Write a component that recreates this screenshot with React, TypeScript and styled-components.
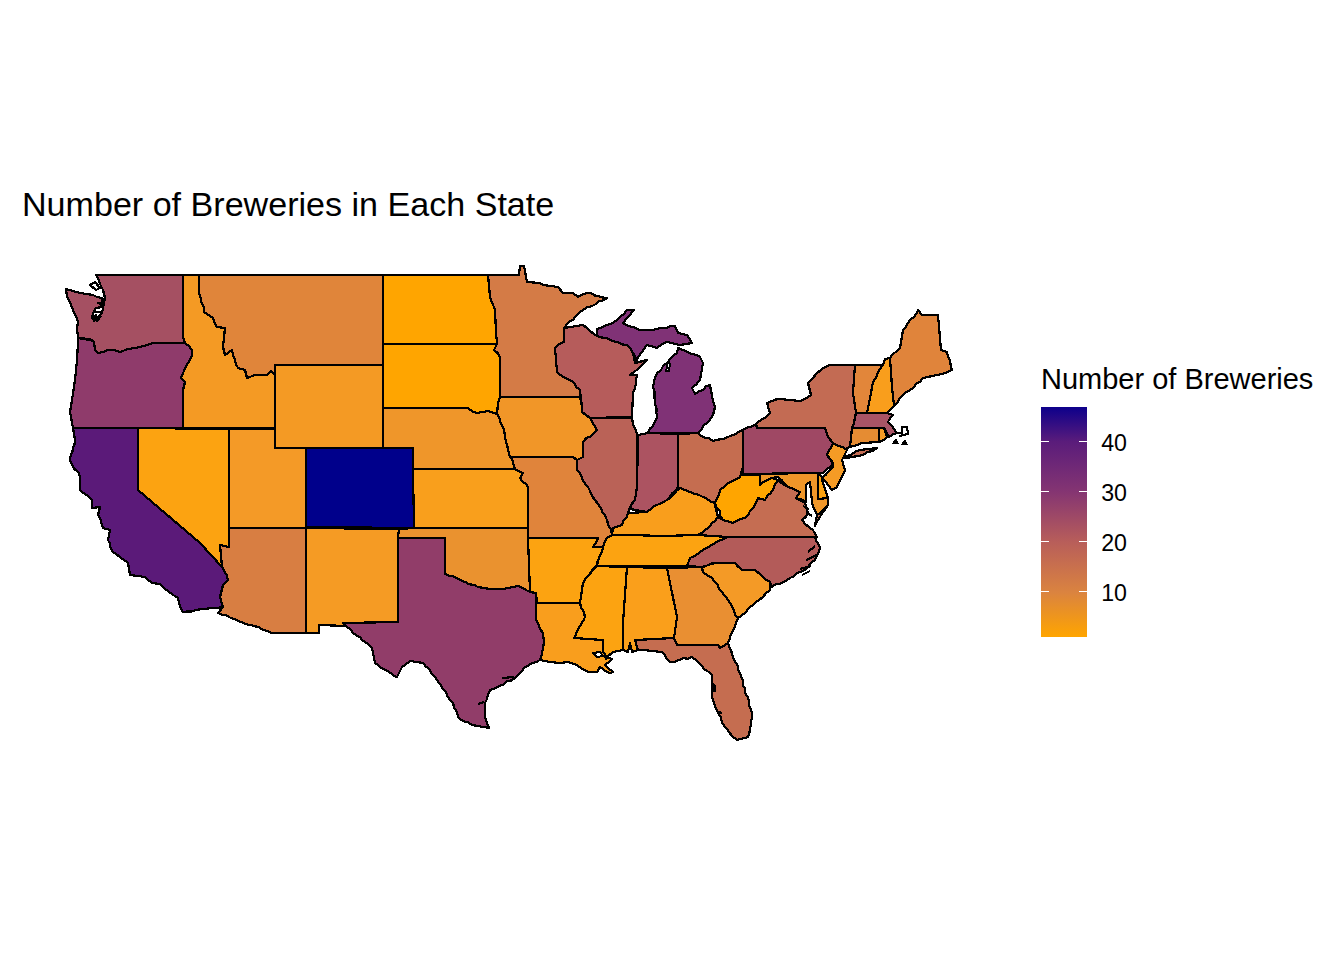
import React from "react";
import styled, { createGlobalStyle } from "styled-components";

const Global = createGlobalStyle`
  html, body { margin: 0; padding: 0; background: #fff; }
  body { font-family: "Liberation Sans", Arial, sans-serif; color: #000; }
`;

const Page = styled.main`
  width: 1344px;
  height: 960px;
  padding-top: 185px;
  box-sizing: border-box;
  overflow: hidden;
`;

const Title = styled.h1`
  margin: 0 0 37px 22px;
  font-size: 34.1px;
  line-height: 38px;
  font-weight: 400;
  white-space: nowrap;
`;

const PlotRow = styled.div`
  display: flex;
  align-items: flex-start;
`;

const MapSvg = styled.svg`
  display: block;
  width: 1000px;
  height: 500px;
  flex: none;
  shape-rendering: crispEdges;
`;

const Region = styled.polygon<{ $fill: string }>`
  fill: ${(p) => p.$fill};
  stroke: #000;
  stroke-width: 2.2px;
  stroke-linejoin: round;
`;

const Coast = styled.path`
  fill: none;
  stroke: #000;
  stroke-width: 2.2px;
  stroke-linejoin: round;
`;

const Water = styled.path`
  fill: #fff;
  stroke: #000;
  stroke-width: 2px;
  stroke-linejoin: round;
`;

const Blob = styled.path`
  fill: #000;
  stroke: #000;
  stroke-width: 1px;
`;

const Legend = styled.aside`
  margin: 102px 0 0 41px;
`;

const LegendTitle = styled.div`
  font-size: 29px;
  line-height: 34px;
  margin-bottom: 11px;
  white-space: nowrap;
`;

const LegendBody = styled.div`
  display: flex;
`;

const Bar = styled.div`
  width: 46px;
  height: 230px;
  box-sizing: border-box;
  padding-top: 34px;
  background: linear-gradient(
    to bottom,
    #0d008b 0%,
    #5a1c7b 15%,
    #853572 37%,
    #b85e5a 58.7%,
    #da8340 80.4%,
    #ffa500 100%
  );
`;

const TickRow = styled.div`
  display: flex;
  justify-content: space-between;
  height: 50px;
`;

const Tick = styled.span`
  display: block;
  width: 8px;
  height: 1px;
  background: #fff;
`;

const Labels = styled.div`
  margin: 11px 0 0 13px;
`;

const Label = styled.div`
  font-size: 23.2px;
  line-height: 50px;
  height: 50px;
  width: 27px;
  text-align: right;
`;

const states: [string, string, string][] = [
  ["WA", "#a55062", "96,275 183,275 183,337 185,343 170,343 153,343 144,346 135,348 128,349 120,352 114,350 108,350 103,352 98,353 95,350 94,342 90,339 78,338 77,328 78,322 73,310 67,297 66,289 73,291 80,293 93,295 97,297 102,298 102,307 96,308 92,318 97,318 102,313 105,298 103,290 100,284"],
  ["OR", "#8f3b6b", "78,338 90,339 94,342 95,350 98,353 103,352 108,350 114,350 120,352 128,349 135,348 144,346 153,343 185,343 192,350 192,355 185,368 181,378 185,382 183,390 183,428 73,428 70,412 72,400 75,380 77,360 78,342"],
  ["CA", "#5b1a79", "73,428 138,428 138,490 200,543 222,567 228,580 223,585 220,597 223,607 217,608 183,612 180,607 178,598 165,589 160,584 152,583 145,577 130,575 128,563 113,552 108,540 110,530 103,528 98,515 100,507 92,508 92,500 80,490 80,477 70,460 75,440"],
  ["NV", "#fca311", "138,428 229,429 229,547 220,545 222,567 200,543 138,490"],
  ["ID", "#f49a24", "183,275 199,275 199,293 204,312 213,318 217,327 225,328 223,347 225,355 232,350 238,368 245,370 247,378 255,375 267,375 271,371 275,375 275,428 227,428 183,428 183,390 185,382 181,378 185,368 192,355 192,350 185,343 183,337"],
  ["MT", "#e0853a", "199,275 383,275 383,365 275,365 275,375 271,371 267,375 255,375 247,378 245,370 238,368 232,350 225,355 223,347 225,328 217,327 213,318 204,312 199,293"],
  ["WY", "#f49a24", "275,365 383,365 383,448 275,448"],
  ["UT", "#f49a27", "229,429 275,429 275,448 306,448 306,528 229,528"],
  ["CO", "#00008b", "306,448 413,448 414,528 306,527"],
  ["AZ", "#d87e42", "229,528 306,528 306,633 272,633 250,625 218,613 223,607 220,597 223,585 228,580 222,567 220,545 229,547"],
  ["NM", "#f59b24", "306,528 399,529 398,622 343,623 347,626 319,625 319,633 306,633"],
  ["ND", "#ffa500", "383,275 488,275 490,297 495,310 496,332 497,344 383,344"],
  ["SD", "#ffa500", "383,344 497,344 494,350 500,357 500,397 498,403 497,414 488,411 477,413 468,408 383,408"],
  ["NE", "#ef962a", "383,408 468,408 477,413 488,411 497,414 503,427 508,450 512,459 515,469 413,469 413,448 383,448"],
  ["KS", "#f99f1c", "413,469 515,469 523,473 520,478 528,487 528,528 414,528"],
  ["OK", "#ea922f", "399,529 414,528 528,528 528,538 530,592 518,586 503,589 490,589 478,587 457,578 445,574 445,538 398,538"],
  ["TX", "#913d69", "398,538 445,538 445,574 457,578 478,587 490,589 503,589 518,586 530,592 536,593 536,620 543,633 544,643 540,660 525,667 515,678 490,690 485,703 485,717 489,728 472,725 458,717 453,703 435,677 423,663 410,661 402,667 397,677 375,663 372,648 347,627 343,623 398,622"],
  ["MN", "#d47b46", "488,275 519,275 520,266 524,266 527,282 540,283 543,285 558,287 563,293 573,293 578,297 587,293 607,298 583,310 564,328 564,342 555,348 557,372 570,380 580,390 580,397 500,397 500,357 494,350 497,344 496,332 495,310 490,297"],
  ["IA", "#f19628", "500,397 580,397 582,407 582,412 590,418 597,430 583,442 583,457 577,460 573,457 510,457 508,450 503,427 497,414 498,403"],
  ["MO", "#e0843b", "510,457 573,457 577,460 577,470 588,487 595,500 607,520 612,535 607,538 603,547 593,547 598,538 528,538 528,487 520,478 523,473 515,469 512,459"],
  ["AR", "#fca311", "528,538 598,538 593,547 603,547 597,565 583,583 580,603 537,603 536,593 530,592"],
  ["LA", "#f99e1d", "537,603 580,603 585,617 574,638 603,640 603,652 607,657 612,659 605,665 613,672 610,673 600,667 597,672 588,672 577,665 568,662 560,663 550,662 540,660 544,643 543,633 536,620 536,603"],
  ["MS", "#fca311", "597,566 627,567 623,623 623,650 613,652 607,657 603,652 603,640 574,638 585,617 580,603 583,583"],
  ["AL", "#fa9f1b", "627,567 667,568 677,617 674,638 635,640 638,650 632,652 630,643 628,652 623,650 623,623"],
  ["GA", "#e98f32", "667,568 702,567 703,572 712,578 730,603 738,618 728,643 720,648 718,645 677,645 674,638 677,617"],
  ["FL", "#c56d50", "635,640 674,638 677,645 718,645 720,648 728,643 740,673 752,713 748,737 737,740 725,727 718,713 712,697 712,675 692,657 670,662 662,652 643,650 638,650"],
  ["SC", "#f49a26", "702,568 715,563 735,563 742,570 755,570 770,582 770,590 753,605 738,618 730,603 712,578 703,572"],
  ["NC", "#b35b59", "728,537 815,537 820,548 815,560 805,570 790,578 772,587 770,582 755,570 742,570 735,563 715,563 702,567 687,566 690,558 707,548 715,543"],
  ["TN", "#fca311", "597,566 603,547 607,538 612,535 630,535 662,536 698,535 728,537 715,543 707,548 690,558 687,566"],
  ["KY", "#f99e1c", "612,535 613,528 622,525 628,513 647,512 657,505 667,500 680,488 690,492 703,497 713,500 715,505 718,517 705,530 698,535 662,536 630,535"],
  ["IL", "#ba6257", "590,418 632,418 637,435 637,487 635,500 630,507 628,513 622,525 613,528 612,535 607,520 595,500 588,487 577,470 577,460 583,457 583,442 597,430"],
  ["WI", "#b65c5b", "564,328 583,325 587,328 597,336 627,345 633,353 635,363 647,360 630,375 637,375 633,393 632,417 590,418 582,412 582,407 580,390 570,380 557,372 555,348 564,342"],
  ["MI-U", "#803276", "597,336 597,329 617,320 627,310 634,310 623,323 640,330 653,330 675,326 678,333 687,335 692,343 680,345 667,342 657,348 647,345 637,360 633,353 627,345"],
  ["MI-L", "#803276", "678,348 700,357 703,363 700,380 692,388 695,394 710,385 715,407 713,415 698,433 648,433 657,417 653,387 657,373 667,363 677,353"],
  ["IN", "#ac5361", "638,435 648,433 678,434 678,487 667,500 657,505 647,512 630,509 635,500 637,487"],
  ["OH", "#c56d50", "678,434 698,433 700,435 713,441 728,437 743,430 743,467 740,477 730,482 720,490 715,503 703,497 690,492 680,488 678,487"],
  ["PA", "#9f4864", "743,430 756,424 757,428 825,428 828,437 833,443 827,455 833,463 823,473 743,474"],
  ["NY", "#c36b53", "757,428 756,424 770,413 767,403 780,399 800,401 811,395 808,383 823,368 830,365 855,365 853,393 856,413 852,428 850,447 843,450 833,443 828,437 825,428"],
  ["LI", "#c36b53", "843,457 860,450 877,448 863,455 847,458"],
  ["VT", "#e2863a", "855,365 883,365 873,382 870,398 867,413 856,413 853,393"],
  ["NH", "#f99e1c", "883,365 885,359 890,358 892,387 894,406 887,413 867,413 870,398 873,382"],
  ["ME", "#e0843b", "890,358 900,348 903,330 918,310 922,315 938,315 941,350 947,352 952,370 937,375 923,378 910,390 900,398 894,406 892,387"],
  ["MA", "#a95466", "856,413 887,413 893,415 888,422 897,433 889,437 884,428 852,428"],
  ["CT", "#e58c33", "852,428 879,428 879,442 862,443 850,447"],
  ["RI", "#f59b25", "879,428 884,428 887,437 880,442 879,442"],
  ["NJ", "#f59b25", "833,443 847,450 842,460 845,470 837,487 832,490 822,478 833,467 833,463 827,455"],
  ["MD", "#ef9629", "743,474 818,473 818,499 828,498 828,505 817,515 812,502 810,482 806,485 806,502 796,498 800,492 788,487 778,477 772,478 760,485 760,474"],
  ["DE", "#fca311", "818,473 822,477 828,498 818,499"],
  ["WV", "#ffa500", "743,467 743,475 760,475 760,485 772,478 778,480 773,490 765,500 758,498 753,508 745,518 733,523 723,520 715,503 720,490 730,482 740,477"],
  ["VA", "#c56d52", "698,535 705,530 718,517 723,520 733,523 745,518 753,508 758,498 765,500 773,490 778,480 788,487 800,492 796,498 805,503 808,513 802,520 813,530 817,537 728,537"],
  ["VA-E", "#c56d52", "828,505 817,515 815,526 820,517"],
];

// Surveyed straight borders that must not pick up the shoreline/river wobble.
const straightEdges = new Set([
  "138,490|200,543",
  "200,543|222,567",
  "623,623|627,567",
  "667,568|677,617",
]);

const hash = (n: number) => {
  const s = Math.sin(n * 127.1) * 43758.5453;
  return s - Math.floor(s);
};

// Adds a small irregularity to river and shore edges. An edge gets the same
// wobble in both neighbouring states because it is computed from the sorted pair.
const roughen = (points: string) => {
  const pts = points.split(" ").map((p) => p.split(",").map(Number));
  const out: string[] = [];
  pts.forEach(([x0, y0], i) => {
    const [x1, y1] = pts[(i + 1) % pts.length];
    out.push(`${x0},${y0}`);
    const dx = x1 - x0;
    const dy = y1 - y0;
    const a = `${x0},${y0}`;
    const b = `${x1},${y1}`;
    const forward = x0 < x1 || (x0 === x1 && y0 < y1);
    const key = forward ? `${a}|${b}` : `${b}|${a}`;
    if (Math.abs(dx) <= 3 || Math.abs(dy) <= 3 || straightEdges.has(key)) return;
    const len = Math.hypot(dx, dy);
    const steps = Math.floor(len / 4);
    const seed = x0 + x1 + (y0 + y1) * 7;
    for (let k = 1; k < steps; k++) {
      const idx = forward ? k : steps - k;
      const off = (hash(seed + idx) - 0.5) * 1.8;
      const sign = forward ? 1 : -1;
      const px = x0 + dx * (k / steps) + (-dy / len) * off * sign;
      const py = y0 + dy * (k / steps) + (dx / len) * off * sign;
      out.push(`${px.toFixed(1)},${py.toFixed(1)}`);
    }
  });
  return out.join(" ");
};

const coastDetails = [
  "M90 285 L95 282 L100 288 L96 290 Z",
  "M103 298 L100 308 M97 303 L103 304 M94 312 L101 312 M92 318 L97 321 L101 316",
  "M78 338 L90 340",
  "M806 512 L812 516 M803 506 L809 509",
  "M808 552 L815 546 M806 560 L817 555 M800 569 L811 566 M802 575 L810 571",
  "M718 712 L722 713",
  "M528 666 L522 669 M502 678 L514 677 M484 702 L478 704",
  "M897 433 L902 433 L902 427 L907 427 L908 434 L899 436",
];

const blobs = [
  "M893 443 L896 439 L898 443 Z",
  "M902 444 L905 440 L907 444 Z",
  "M711 682 L716 686 L715 692 L711 690 Z",
  "M604 656 L608 657 L606 660 Z",
  "M98 319 L94 322 L92 318 L96 314 Z",
];

const App: React.FC = () => (
  <Page>
    <Global />
    <Title>Number of Breweries in Each State</Title>
    <PlotRow>
      <MapSvg viewBox="0 260 1000 500" role="img" aria-label="Choropleth map of breweries per US state">
        {states.map(([id, fill, points]) => (
          <Region key={id} $fill={fill} points={roughen(points)} />
        ))}
        <Water d="M593 653 L600 652 L603 656 L597 657 Z" />
        <Water d="M666 371 L668 362 L670 364 L669 371 Z" />
        {coastDetails.map((d) => (
          <Coast key={d} d={d} />
        ))}
        {blobs.map((d) => (
          <Blob key={d} d={d} />
        ))}
      </MapSvg>
      <Legend>
        <LegendTitle>Number of Breweries</LegendTitle>
        <LegendBody>
          <Bar>
            {[40, 30, 20, 10].map((v) => (
              <TickRow key={v}>
                <Tick />
                <Tick />
              </TickRow>
            ))}
          </Bar>
          <Labels>
            {[40, 30, 20, 10].map((v) => (
              <Label key={v}>{v}</Label>
            ))}
          </Labels>
        </LegendBody>
      </Legend>
    </PlotRow>
  </Page>
);

export default App;
